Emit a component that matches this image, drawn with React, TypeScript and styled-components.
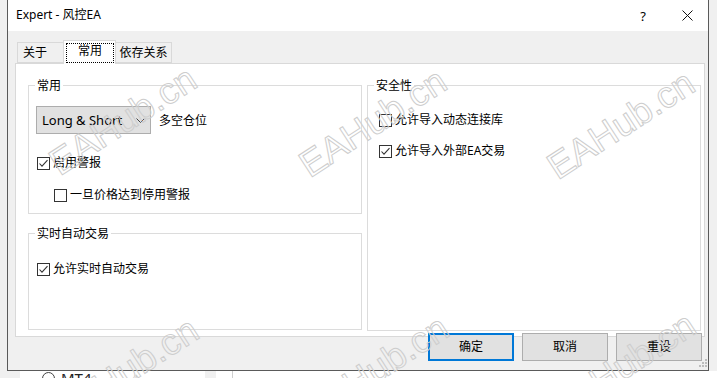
import React from 'react';
import styled, { createGlobalStyle } from 'styled-components';

const watermarks = [
    { x: 123, y: 121 },
    { x: 373, y: 123 },
    { x: 621, y: 125 },
    { x: 125, y: 372 },
    { x: 375, y: 370 },
    { x: 622, y: 367 },
];

function CheckBox({ checked }: { checked?: boolean }) {
    return (
        <Box>
            {checked && (
                <svg width="11" height="11" viewBox="0 0 11 11">
                    <polyline points="1.5,5.5 4,8.2 9.5,2.2" fill="none" stroke="#333" strokeWidth="1.1" />
                </svg>
            )}
        </Box>
    );
}

export default function App() {
    return (
        <>
            <GlobalStyle />
            <Page>
                <Desk>
                    <Gutter />
                    <Window>
                        <TitleBar>
                            <TitleText>Expert - 风控EA</TitleText>
                            <TitleControls>
                                <HelpButton>?</HelpButton>
                                <CloseButton>
                                    <svg width="11" height="11" viewBox="0 0 11 11">
                                        <path d="M0.5 0.5 L10.5 10.5 M10.5 0.5 L0.5 10.5" stroke="#111" strokeWidth="1" />
                                    </svg>
                                </CloseButton>
                            </TitleControls>
                        </TitleBar>

                        <Body>
                            <TabRow>
                                <Tab $w={47} $left>关于</Tab>
                                <Tab $w={53} $active>
                                    <FocusRing>常用</FocusRing>
                                </Tab>
                                <Tab $w={57}>依存关系</Tab>
                            </TabRow>

                            <Panel>
                                <Column>
                                    <Group $h={129}>
                                        <Legend>常用</Legend>
                                        <ComboRow>
                                            <Combo>
                                                <span>Long &amp; Short</span>
                                                <svg width="9" height="5" viewBox="0 0 9 5">
                                                    <polyline points="0.5,0.5 4.5,4.5 8.5,0.5" fill="none" stroke="#444" strokeWidth="1" />
                                                </svg>
                                            </Combo>
                                            <span>多空仓位</span>
                                        </ComboRow>
                                        <CheckRow $top={21}>
                                            <CheckBox checked />
                                            <span>启用警报</span>
                                        </CheckRow>
                                        <CheckRow $top={16} $indent={17}>
                                            <CheckBox />
                                            <span>一旦价格达到停用警报</span>
                                        </CheckRow>
                                    </Group>

                                    <Group $h={97}>
                                        <Legend>实时自动交易</Legend>
                                        <CheckRow $top={19}>
                                            <CheckBox checked />
                                            <span>允许实时自动交易</span>
                                        </CheckRow>
                                    </Group>
                                </Column>

                                <Column>
                                    <Group $h={246}>
                                        <Legend>安全性</Legend>
                                        <CheckRow $top={18} $indent={3}>
                                            <CheckBox />
                                            <span>允许导入动态连接库</span>
                                        </CheckRow>
                                        <CheckRow $top={15} $indent={3}>
                                            <CheckBox checked />
                                            <span>允许导入外部EA交易</span>
                                        </CheckRow>
                                    </Group>
                                </Column>
                            </Panel>

                            <ButtonRow>
                                <DialogButton $primary>确定</DialogButton>
                                <DialogButton>取消</DialogButton>
                                <DialogButton>重设</DialogButton>
                            </ButtonRow>
                        </Body>

                        <Grip>
                            <svg width="8" height="8" viewBox="0 0 8 8">
                                <rect x="6" y="0" width="2" height="2" fill="#bdbdbd" />
                                <rect x="3" y="3" width="2" height="2" fill="#bdbdbd" />
                                <rect x="6" y="3" width="2" height="2" fill="#bdbdbd" />
                                <rect x="0" y="6" width="2" height="2" fill="#bdbdbd" />
                                <rect x="3" y="6" width="2" height="2" fill="#bdbdbd" />
                                <rect x="6" y="6" width="2" height="2" fill="#bdbdbd" />
                            </svg>
                        </Grip>
                    </Window>
                </Desk>

                <Taskbar>
                    <Strip $w={20} />
                    <Strip $w={185} $white>
                        <Radio />
                        <BgText>MT4</BgText>
                    </Strip>
                    <Strip $w={11} />
                    <Strip $w={16} $white />
                    <Strip $white $line />
                </Taskbar>

                {watermarks.map((w, i) => (
                    <Watermark key={i} style={{ left: w.x, top: w.y }}>EAHub.cn</Watermark>
                ))}
            </Page>
        </>
    );
}

const GlobalStyle = createGlobalStyle`
    html, body {
        margin: 0;
        padding: 0;
    }

    body {
        background: #f0f0f0;
        font-family: "Noto Sans", "Noto Sans CJK SC", sans-serif;
        font-size: 12px;
        color: #000;
    }
`;

const Page = styled.div`
    position: relative;
    width: 717px;
    height: 378px;
    overflow: hidden;
    display: flex;
    flex-direction: column;
    background: #f0f0f0;
`;

const Desk = styled.div`
    display: flex;
    height: 371px;
    flex-shrink: 0;
`;

const Gutter = styled.div`
    width: 7px;
    flex-shrink: 0;
`;

const Window = styled.div`
    position: relative;
    width: 702px;
    height: 371px;
    box-sizing: border-box;
    border: 1px solid #5a5a5a;
    border-top: none;
    background: #f0f0f0;
    display: flex;
    flex-direction: column;
`;

const TitleBar = styled.div`
    height: 31px;
    flex-shrink: 0;
    background: #fff;
    display: flex;
    align-items: center;
    padding-left: 8px;
`;

const TitleText = styled.div`
    flex: 1;
    line-height: 16px;
    margin-top: -1px;
`;

const TitleControls = styled.div`
    display: flex;
    align-items: center;
    gap: 9px;
    margin-right: 1px;
`;

const HelpButton = styled.div`
    width: 30px;
    text-align: center;
    font-size: 13px;
    line-height: 16px;
`;

const CloseButton = styled.div`
    width: 40px;
    display: flex;
    justify-content: center;
    align-items: center;
`;

const Body = styled.div`
    flex: 1;
    display: flex;
    flex-direction: column;
    padding: 9px 3px 0 7px;
`;

const TabRow = styled.div`
    display: flex;
    align-items: flex-end;
    height: 23px;
    padding-left: 2px;
`;

const Tab = styled.div<{ $w: number; $active?: boolean; $left?: boolean }>`
    position: relative;
    width: ${p => p.$w}px;
    height: ${p => (p.$active ? 24 : 21)}px;
    box-sizing: border-box;
    margin-left: ${p => (p.$left ? 0 : -1)}px;
    margin-bottom: ${p => (p.$active ? -1 : 0)}px;
    z-index: ${p => (p.$active ? 1 : 0)};
    border: 1px solid #d9d9d9;
    border-bottom: ${p => (p.$active ? 'none' : '1px solid #d9d9d9')};
    background: ${p => (p.$active ? '#fff' : '#f0f0f0')};
    display: flex;
    align-items: center;
    justify-content: ${p => (p.$left ? 'flex-start' : 'center')};
    padding-left: ${p => (p.$left ? 5 : 0)}px;
    padding-top: ${p => (p.$active ? 0 : 1)}px;
    line-height: 16px;
`;

const FocusRing = styled.div`
    flex: 1;
    align-self: stretch;
    margin: 2px 1px 1px 2px;
    border: 1px dotted #000;
    display: flex;
    align-items: center;
    justify-content: center;
    padding-bottom: 4px;
`;

const Panel = styled.div`
    height: 274px;
    flex-shrink: 0;
    box-sizing: border-box;
    border: 1px solid #d9d9d9;
    background: #fff;
    padding: 21px 2px 0 12px;
    display: grid;
    grid-template-columns: 334px 334px;
    column-gap: 5px;
    align-items: start;
`;

const Column = styled.div`
    display: flex;
    flex-direction: column;
    gap: 19px;
`;

const Group = styled.div<{ $h: number }>`
    height: ${p => p.$h}px;
    box-sizing: border-box;
    border: 1px solid #dcdcdc;
    padding-left: 8px;
    display: flex;
    flex-direction: column;
    align-items: flex-start;
`;

const Legend = styled.div`
    height: 16px;
    line-height: 16px;
    margin: -8px 0 0 -2px;
    padding: 0 2px;
    background: #fff;
`;

const ComboRow = styled.div`
    display: flex;
    align-items: center;
    gap: 8px;
    margin: 12px 0 0 -1px;
`;

const Combo = styled.div`
    width: 115px;
    height: 28px;
    box-sizing: border-box;
    border: 1px solid #adadad;
    background: #e1e1e1;
    display: flex;
    align-items: center;
    justify-content: space-between;
    padding: 0 5px 0 5px;
    font-size: 13px;

    svg {
        margin-top: 1px;
    }
`;

const CheckRow = styled.div<{ $top: number; $indent?: number }>`
    display: flex;
    align-items: center;
    gap: 3px;
    height: 16px;
    margin-top: ${p => p.$top}px;
    margin-left: ${p => p.$indent ?? 0}px;
    line-height: 16px;
`;

const Box = styled.div`
    width: 13px;
    height: 13px;
    box-sizing: border-box;
    border: 1px solid #333;
    background: #fff;
    display: flex;
    align-items: center;
    justify-content: center;
    flex-shrink: 0;
`;

const ButtonRow = styled.div`
    display: flex;
    justify-content: flex-end;
    gap: 8px;
    margin-top: -4px;
    padding-right: 3px;
`;

const DialogButton = styled.div<{ $primary?: boolean }>`
    width: 86px;
    height: 28px;
    box-sizing: border-box;
    border: ${p => (p.$primary ? '2px solid #0078d7' : '1px solid #adadad')};
    background: #e1e1e1;
    display: flex;
    align-items: center;
    justify-content: center;
    line-height: 16px;
`;

const Grip = styled.div`
    position: absolute;
    right: 1px;
    bottom: 3px;
    width: 8px;
    height: 8px;

    svg {
        display: block;
    }
`;

const Taskbar = styled.div`
    display: flex;
    height: 7px;
    overflow: hidden;
`;

const Strip = styled.div<{ $w?: number; $white?: boolean; $line?: boolean }>`
    width: ${p => (p.$w ? `${p.$w}px` : 'auto')};
    flex: ${p => (p.$w ? '0 0 auto' : '1')};
    background: ${p => (p.$white ? '#fff' : '#f0f0f0')};
    border-left: ${p => (p.$line ? '1px solid #cfcfcf' : 'none')};
    display: flex;
    align-items: flex-start;
    padding-left: ${p => (p.$w === 185 ? 22 : 0)}px;
    box-sizing: border-box;
`;

const Radio = styled.div`
    width: 13px;
    height: 13px;
    box-sizing: border-box;
    border: 1px solid #444;
    border-radius: 50%;
    margin-top: 1px;
`;

const BgText = styled.div`
    font-size: 15px;
    line-height: 16px;
    margin: -1px 0 0 6px;
    color: #222;
`;

const Watermark = styled.div`
    position: absolute;
    transform: translate(-50%, -50%) rotate(-33deg);
    font-family: "Liberation Sans", Arial, sans-serif;
    font-size: 37px;
    white-space: nowrap;
    color: transparent;
    -webkit-text-stroke: 1px #cdcdcd;
    pointer-events: none;
    z-index: 10;
`;
